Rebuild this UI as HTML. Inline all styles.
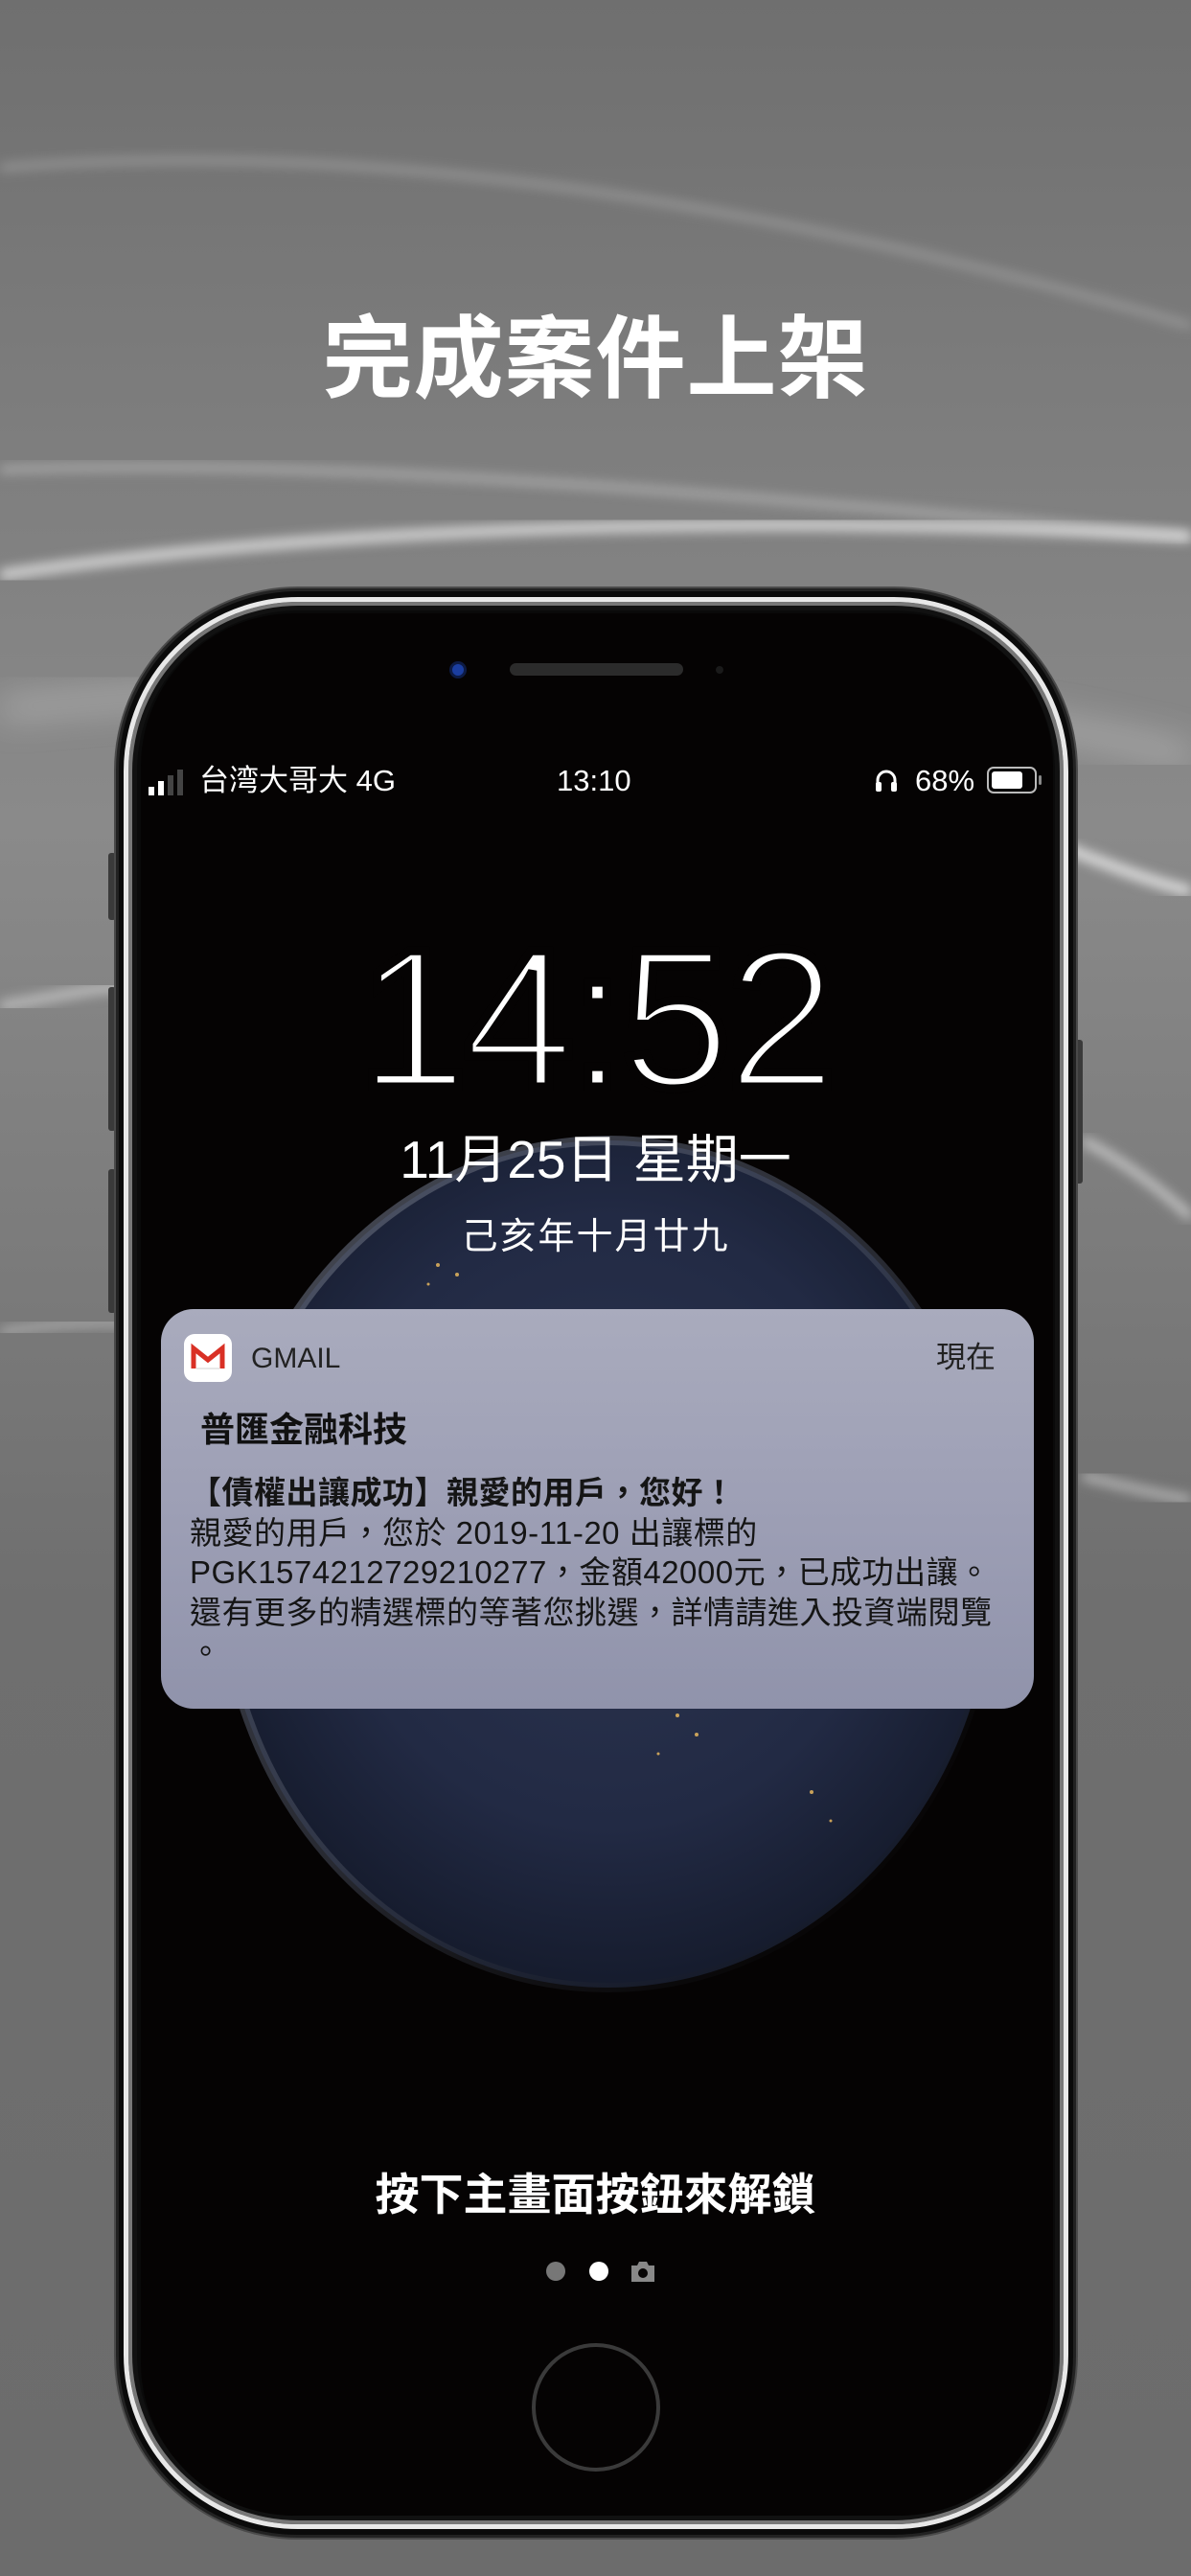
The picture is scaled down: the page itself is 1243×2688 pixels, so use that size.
<!DOCTYPE html>
<html><head><meta charset="utf-8">
<style>
*{margin:0;padding:0;box-sizing:border-box}
html,body{width:1243px;height:2688px;overflow:hidden}
body{position:relative;background:#737373;font-family:"Liberation Sans","Noto Sans CJK TC",sans-serif}
.abs{position:absolute}
.title{left:0;width:1243px;top:318px;text-align:center;color:#fff;font-size:94px;font-weight:bold;font-family:"Liberation Sans","Noto Sans CJK TC",sans-serif;letter-spacing:1px;line-height:114px}
.phone{left:121px;top:614px;width:1002px;height:2034px;border-radius:190px;background:#0a0a0a;border:3px solid #222;box-shadow:0 0 0 2px #4a4a4a}
.rim{left:129px;top:623px;width:986px;height:2016px;border-radius:182px;border:5px solid #e8e8e8;box-shadow:inset 0 0 0 4px #777,inset 0 0 0 9px #111}
.screen{left:147px;top:640px;width:952px;height:1985px;border-radius:160px;background:#050303;overflow:hidden}
.st{color:#fff;font-size:31px;top:797px;line-height:36px}
.clock{left:0;width:1243px;text-align:center;top:958px;font-size:206px;line-height:210px;color:#fff;-webkit-text-stroke:9px #050303;letter-spacing:-4px;font-family:"Liberation Sans",sans-serif}
.date{left:0;width:1243px;text-align:center;top:1180px;font-size:55px;line-height:60px;color:#fff}
.lunar{left:0;width:1243px;text-align:center;top:1268px;font-size:38px;line-height:46px;color:#fff;letter-spacing:2px}
.notif{left:168px;top:1366px;width:911px;height:417px;border-radius:34px;background:linear-gradient(180deg,#a9abbd 0%,#9d9fb5 50%,#9093ab 100%);color:#151515}
.unlock{left:0;width:1243px;text-align:center;top:2262px;font-size:46px;line-height:56px;color:#fff;font-weight:bold;letter-spacing:0px}
</style></head><body>
<svg class="abs" style="left:0;top:0" width="1243" height="2688">
<defs>
<linearGradient id="bg" x1="0" y1="0" x2="0" y2="1">
<stop offset="0" stop-color="#6f6f6f"/><stop offset="0.15" stop-color="#7c7c7c"/><stop offset="0.32" stop-color="#8a8a8a"/><stop offset="0.5" stop-color="#7a7a7a"/><stop offset="0.62" stop-color="#6f6f6f"/><stop offset="1" stop-color="#6c6c6c"/>
</linearGradient>
<filter id="b"><feGaussianBlur stdDeviation="6"/></filter>
<filter id="b2"><feGaussianBlur stdDeviation="18"/></filter>
</defs>
<rect width="1243" height="2688" fill="url(#bg)"/>
<path d="M0 175 C300 150 700 180 1243 340" stroke="#a8a8a8" stroke-width="5" fill="none" filter="url(#b)"/>
<path d="M0 490 C300 480 600 500 1243 560" stroke="#b8b8b8" stroke-width="6" fill="none" filter="url(#b)"/>
<path d="M0 600 C400 540 900 540 1243 560" stroke="#e0e0e0" stroke-width="10" fill="none" filter="url(#b)"/>
<path d="M0 740 C400 700 900 700 1243 790" stroke="#c8c8c8" stroke-width="12" fill="none" filter="url(#b2)"/>
<path d="M1100 880 C1150 900 1200 920 1243 930" stroke="#e8e8e8" stroke-width="10" fill="none" filter="url(#b)"/>
<path d="M0 1050 C60 1040 100 1030 130 1030" stroke="#c0c0c0" stroke-width="10" fill="none" filter="url(#b)"/>
<path d="M1130 1190 C1170 1210 1210 1240 1243 1270" stroke="#d0d0d0" stroke-width="8" fill="none" filter="url(#b)"/>
<path d="M1130 1540 C1170 1550 1210 1560 1243 1565" stroke="#bdbdbd" stroke-width="8" fill="none" filter="url(#b)"/>
<path d="M0 1390 C60 1380 100 1380 130 1380" stroke="#b0b0b0" stroke-width="8" fill="none" filter="url(#b)"/>
</svg>
<div class="abs title">完成案件上架</div>
<div class="abs" style="left:113px;top:890px;width:8px;height:70px;background:#3a3a3a;border-radius:3px"></div>
<div class="abs" style="left:113px;top:1030px;width:8px;height:150px;background:#3a3a3a;border-radius:3px"></div>
<div class="abs" style="left:113px;top:1220px;width:8px;height:150px;background:#3a3a3a;border-radius:3px"></div>
<div class="abs" style="left:1122px;top:1085px;width:8px;height:150px;background:#3a3a3a;border-radius:3px"></div>
<div class="abs phone"></div>
<div class="abs rim"></div>
<div class="abs screen">
<svg class="abs" style="left:0;top:0" width="952" height="1985">
<defs>
<radialGradient id="earth" cx="0.5" cy="0.45" r="0.6">
<stop offset="0" stop-color="#2c3550"/><stop offset="0.6" stop-color="#222a44"/><stop offset="0.9" stop-color="#161c2e"/><stop offset="1" stop-color="#0e1220"/>
</radialGradient>
<linearGradient id="limb" x1="0" y1="0" x2="1" y2="1">
<stop offset="0" stop-color="#6a7080" stop-opacity="0.7"/><stop offset="0.5" stop-color="#4a5060" stop-opacity="0.5"/><stop offset="1" stop-color="#000" stop-opacity="0"/>
</linearGradient>
</defs>
<ellipse cx="487" cy="992" rx="403" ry="442" fill="url(#earth)"/>
<ellipse cx="487" cy="992" rx="403" ry="442" fill="none" stroke="url(#limb)" stroke-width="10"/>
<g fill="#f3c060" opacity="0.8">
<circle cx="310" cy="680" r="2"/><circle cx="330" cy="690" r="2"/><circle cx="300" cy="700" r="1.5"/><circle cx="560" cy="1150" r="2"/><circle cx="580" cy="1170" r="2"/><circle cx="540" cy="1190" r="1.5"/><circle cx="600" cy="1130" r="1.5"/><circle cx="520" cy="1120" r="1.5"/><circle cx="700" cy="1230" r="2"/><circle cx="720" cy="1260" r="1.5"/>
</g>
</svg>
<div class="abs" style="left:322px;top:50px;width:18px;height:18px;border-radius:50%;background:#1b3ea0;border:3px solid #0d1b44"></div>
<div class="abs" style="left:385px;top:52px;width:181px;height:13px;border-radius:7px;background:#2b2b2b"></div>
<div class="abs" style="left:600px;top:55px;width:8px;height:8px;border-radius:50%;background:#1a1a1a"></div>
</div>
<div class="abs" style="left:155px;top:821px;width:6px;height:9px;background:#fff"></div>
<div class="abs" style="left:165px;top:815px;width:6px;height:15px;background:#fff"></div>
<div class="abs" style="left:175px;top:809px;width:6px;height:21px;background:#444"></div>
<div class="abs" style="left:185px;top:803px;width:6px;height:27px;background:#444"></div>
<div class="abs st" style="left:208px">台湾大哥大 4G</div>
<div class="abs st" style="left:581px">13:10</div>
<svg class="abs" style="left:912px;top:800px" width="26" height="28"><path d="M4 24 V14 a9 9 0 0 1 18 0 V24" stroke="#fff" stroke-width="3" fill="none"/><rect x="2" y="16" width="6" height="10" rx="2" fill="#fff"/><rect x="18" y="16" width="6" height="10" rx="2" fill="#fff"/></svg>
<div class="abs st" style="left:955px">68%</div>
<div class="abs" style="left:1030px;top:800px;width:52px;height:28px;border:2px solid #bbb;border-radius:7px"><div style="position:absolute;left:3px;top:3px;width:32px;height:18px;background:#fff;border-radius:3px"></div></div>
<div class="abs" style="left:1084px;top:809px;width:3px;height:10px;background:#888;border-radius:2px"></div>
<div class="abs clock">14:52</div>
<div class="abs date">11月25日 星期一</div>
<div class="abs lunar">己亥年十月廿九</div>
<div class="abs notif">
<div class="abs" style="left:24px;top:26px;width:50px;height:50px;border-radius:11px;background:#fff">
<svg width="50" height="50"><path d="M10 36 V15 L25 27 L40 15 V36" stroke="#d93025" stroke-width="5" fill="none"/><path d="M13 36 H37" stroke="#e8e8e8" stroke-width="2"/></svg>
</div>
<div class="abs" style="left:94px;top:34px;font-size:30px;line-height:36px;color:#222">GMAIL</div>
<div class="abs" style="right:40px;top:33px;font-size:31px;line-height:36px;color:#222">現在</div>
<div class="abs" style="left:41px;top:104px;font-size:36px;line-height:44px;font-weight:bold;color:#111">普匯金融科技</div>
<div class="abs" style="left:30px;top:171px;width:890px;font-size:33px;line-height:41.5px;color:#151515;letter-spacing:0.5px">
<div style="font-weight:bold">【債權出讓成功】親愛的用戶，您好！</div>
<div>親愛的用戶，您於 2019-11-20 出讓標的</div>
<div>PGK1574212729210277，金額42000元，已成功出讓。</div>
<div style="white-space:nowrap">還有更多的精選標的等著您挑選，詳情請進入投資端閱覽</div>
<div>。</div>
</div>
</div>
<div class="abs unlock">按下主畫面按鈕來解鎖</div>
<div class="abs" style="left:570px;top:2360px;width:20px;height:20px;border-radius:50%;background:#777"></div>
<div class="abs" style="left:615px;top:2360px;width:20px;height:20px;border-radius:50%;background:#fff"></div>
<svg class="abs" style="left:658px;top:2358px" width="26" height="24"><path d="M1 6 H7 L9 2 H17 L19 6 H25 V23 H1 Z" fill="#888"/><circle cx="13" cy="14" r="5" fill="#050303"/></svg>
<div class="abs" style="left:555px;top:2445px;width:134px;height:134px;border-radius:50%;border:4px solid #3a3a3a"></div>
</body></html>
